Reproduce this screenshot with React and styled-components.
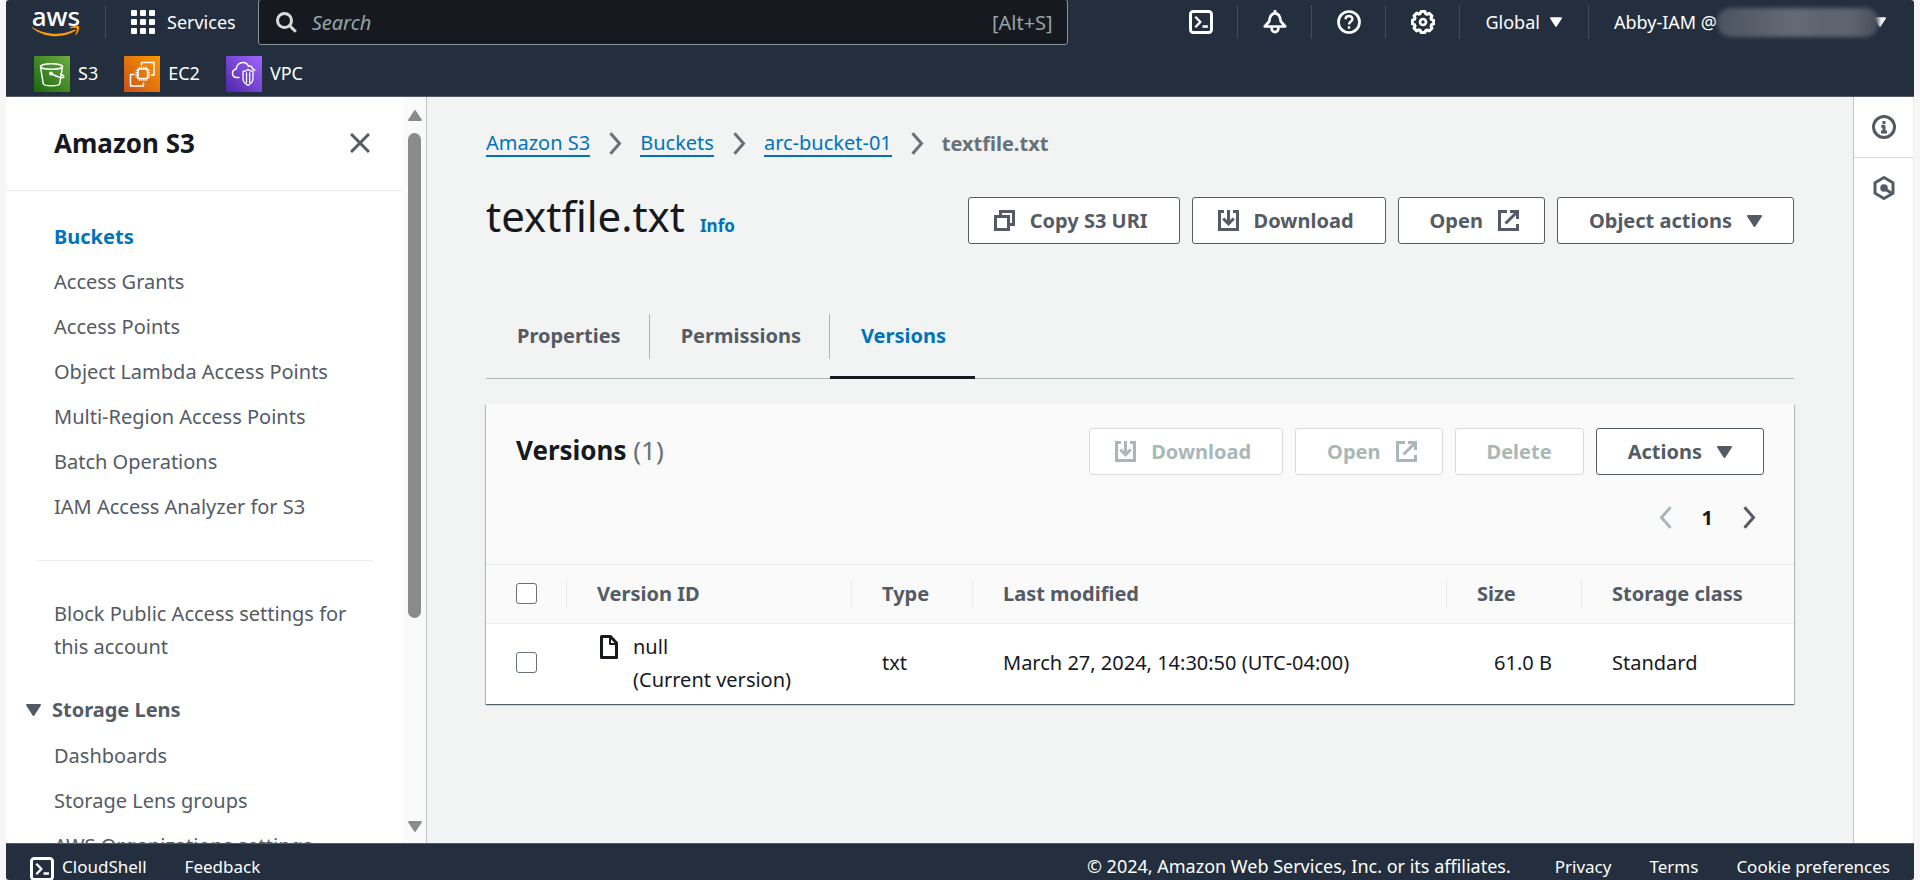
import React from "react";
import styled, { createGlobalStyle } from "styled-components";

const c = {
  navy: "#232f3e",
  ink: "#16191f",
  text: "#545b64",
  muted: "#687078",
  link: "#0073bb",
  disabled: "#aab7b8",
  line: "#eaeded",
  canvas: "#f2f3f3",
};

const GlobalStyle = createGlobalStyle`
  *, *::before, *::after { box-sizing: border-box; }
  body {
    margin: 0;
    background: #f6f6f6;
    color: ${c.ink};
    font-family: "Noto Sans", "Open Sans", sans-serif;
    font-size: 20px;
    line-height: 33px;
  }
  a { color: inherit; text-decoration: none; }
  button { font: inherit; color: inherit; background: none; border: 0; padding: 0; cursor: pointer; }
  button:disabled { cursor: default; }
  ul, ol { list-style: none; margin: 0; padding: 0; }
  h1, h2 { margin: 0; }
  svg { display: block; flex: none; }
`;

const Shell = styled.div`
  display: flex;
  flex-direction: column;
  height: 100vh;
  margin: 0 6px;
  overflow: hidden;
  border-radius: 3px;
  background: #fff;
`;

/* ---------- Top navigation ---------- */

const TopNav = styled.header`
  flex: none;
  background: ${c.navy};
  border-bottom: 1px solid ${c.text};
  color: #fff;
  font-size: 18px;
`;

const NavRow = styled.div`
  display: flex;
  align-items: center;
  height: 44px;
  padding: 0 28px 0 26px;
`;

const Logo = styled.a`
  display: flex;
  flex-direction: column;
  align-items: center;
  width: 48px;
  font-size: 26px;
  font-weight: 500;
  line-height: 18px;
`;

const Rule = styled.span`
  width: 1px;
  height: 34px;
  background: #414d5c;
  flex: none;
  margin-left: ${(p) => p.$before || 0}px;
`;

const ServicesButton = styled.button`
  display: flex;
  align-items: center;
  gap: 12px;
  margin: 0 22px 0 25px;
`;

const SearchBox = styled.label`
  display: flex;
  align-items: center;
  gap: 15px;
  flex: 0 1 810px;
  height: 46px;
  padding: 0 14px 0 17px;
  background: ${c.ink};
  border: 1px solid #879596;
  border-radius: 3px;
  color: #95a5a6;
  font-size: 20px;
`;

const SearchInput = styled.input`
  flex: 1;
  min-width: 0;
  border: 0;
  outline: 0;
  padding: 0;
  background: transparent;
  color: #fff;
  font: inherit;
  &::placeholder { color: #95a5a6; font-style: italic; opacity: 1; }
`;

const NavEnd = styled.div`
  display: flex;
  align-items: center;
  margin-left: auto;
`;

const NavIcon = styled.button`
  display: flex;
  justify-content: center;
  width: 73px;
`;

const NavMenu = styled.button`
  display: flex;
  align-items: center;
  gap: ${(p) => p.$gap || 0}px;
  padding: ${(p) => p.$pad};
  white-space: nowrap;
`;

const Redacted = styled.span`
  position: relative;
  z-index: 1;
  width: 162px;
  height: 29px;
  margin-right: -5px;
  border-radius: 14px;
  background: linear-gradient(90deg, #4b5361, #565d69 20%, #656b76 48%, #5d636f 66%, #5f6570 82%, #454d5b);
  filter: blur(2px);
`;

const Favorites = styled.nav`
  display: flex;
  align-items: center;
  gap: 26px;
  height: 52px;
  padding: 7px 28px 0;
`;

const Favorite = styled.a`
  display: flex;
  align-items: center;
  gap: 8px;
`;

/* ---------- Side navigation ---------- */

const Workspace = styled.div`
  display: flex;
  flex: 1;
  min-height: 0;
`;

const Sidebar = styled.aside`
  display: flex;
  flex: none;
  width: 421px;
  border-right: 1px solid #bcc4c4;
  color: ${c.text};
`;

const SideScroll = styled.div`
  flex: 1;
  overflow: hidden;
`;

const SideHeader = styled.div`
  display: flex;
  align-items: center;
  justify-content: space-between;
  height: 94px;
  padding: 0 33px 2px 48px;
  border-bottom: 1px solid ${c.line};
  color: ${c.ink};
`;

const SideTitle = styled.h2`
  font-size: 26px;
  font-weight: 700;
  line-height: 36px;
`;

const SideList = styled.ul`
  display: flex;
  flex-direction: column;
  gap: 12px;
  padding: ${(p) => p.$pad};
`;

const SideLink = styled.a`
  display: block;
  color: ${(p) => (p.$active ? c.link : c.text)};
  font-weight: ${(p) => (p.$active ? 700 : 400)};
`;

const SideRule = styled.hr`
  margin: 37px 30px 36px;
  border: 0;
  border-top: 1px solid ${c.line};
`;

const SideGroup = styled.button`
  display: flex;
  align-items: center;
  gap: 11px;
  padding-left: 20px;
  margin-top: 30px;
  font-weight: 700;
`;

const Scrollbar = styled.div`
  display: flex;
  flex-direction: column;
  align-items: center;
  flex: none;
  width: 23px;
  padding: 13px 0 11px;
  background: #fafafa;
`;

const Track = styled.div`
  flex: 1;
  margin: 12px 0 13px;
  padding-bottom: 190px;
  width: 13px;
`;

const Thumb = styled.div`
  height: 100%;
  border-radius: 7px;
  background: #8b8b8b;
`;

/* ---------- Content ---------- */

const Main = styled.main`
  flex: 1;
  min-width: 0;
  padding: 30px 59px;
  background: ${c.canvas};
`;

const Breadcrumbs = styled.ol`
  display: flex;
  align-items: center;
`;

const Crumb = styled.li`
  display: flex;
  align-items: center;
  gap: 19px;
  margin-right: 18px;
  color: ${c.muted};
  font-weight: ${(p) => (p.$current ? 700 : 400)};
  a {
    color: ${c.link};
    line-height: 25px;
    border-bottom: 2px solid ${c.link};
  }
`;

const PageHeader = styled.div`
  display: flex;
  align-items: flex-start;
  justify-content: space-between;
  margin-top: 37px;
`;

const TitleGroup = styled.div`
  display: flex;
  align-items: baseline;
  gap: 15px;
`;

const PageTitle = styled.h1`
  font-size: 42px;
  font-weight: 400;
  line-height: 38px;
`;

const InfoLink = styled.a`
  color: ${c.link};
  font-size: 17px;
  font-weight: 700;
`;

const Actions = styled.div`
  display: flex;
  gap: 12px;
`;

const Button = styled.button`
  display: flex;
  align-items: center;
  justify-content: center;
  gap: 15px;
  height: 47px;
  padding: 0 ${(p) => p.$right || 31}px 0 ${(p) => p.$left || 31}px;
  background: #fff;
  border: 1px solid ${c.text};
  border-radius: 3px;
  color: ${c.text};
  font-weight: 700;
  white-space: nowrap;
  &:disabled { color: ${c.disabled}; border-color: #d5dbdb; }
`;

const Tabs = styled.div`
  display: flex;
  margin-top: 63px;
  border-bottom: 1px solid ${c.disabled};
`;

const Tab = styled.button`
  position: relative;
  height: 72px;
  padding: 0 29px 12px 31px;
  margin-bottom: -1px;
  border-bottom: 3px solid ${(p) => (p.$active ? c.ink : "transparent")};
  color: ${(p) => (p.$active ? c.link : c.text)};
  font-weight: 700;
  &:not(:last-child)::after {
    content: "";
    position: absolute;
    top: 7px;
    right: 0;
    width: 1px;
    height: 45px;
    background: ${c.disabled};
  }
`;

const Card = styled.section`
  margin-top: 25px;
  background: #fff;
  box-shadow: 0 1px 1px 0 rgba(0, 28, 36, 0.5), 1px 1px 1px 0 rgba(0, 28, 36, 0.2), -1px 1px 1px 0 rgba(0, 28, 36, 0.2);
`;

const CardHeader = styled.div`
  padding: 24px 30px 17px;
  background: #fafafa;
  border-bottom: 1px solid ${c.line};
`;

const CardTop = styled.div`
  display: flex;
  justify-content: space-between;
  align-items: flex-start;
`;

const CardTitle = styled.h2`
  font-size: 26px;
  font-weight: 700;
  line-height: 44px;
  span { color: ${c.muted}; font-weight: 400; }
`;

const Pager = styled.div`
  display: flex;
  align-items: center;
  justify-content: flex-end;
  gap: 30px;
  height: 60px;
  margin-top: 12px;
  padding-right: 8px;
  color: ${c.text};
  font-weight: 700;
  button:disabled { color: ${c.disabled}; }
  span { color: ${c.ink}; }
`;

const Table = styled.table`
  width: 100%;
  table-layout: fixed;
  border-collapse: collapse;
`;

const Head = styled.th`
  position: relative;
  width: ${(p) => (p.$w ? p.$w + "px" : "auto")};
  height: 58px;
  padding: 0 30px;
  background: #fafafa;
  border-bottom: 1px solid ${c.line};
  color: ${c.text};
  font-weight: 700;
  text-align: left;
  white-space: nowrap;
  &:not(:last-child)::after {
    content: "";
    position: absolute;
    top: 14px;
    right: 0;
    width: 1px;
    height: 30px;
    background: ${c.line};
  }
`;

const Cell = styled.td`
  height: 80px;
  padding: 6px 30px 8px;
  text-align: ${(p) => (p.$end ? "right" : "left")};
  white-space: nowrap;
`;

const VersionId = styled.div`
  display: flex;
  gap: 15px;
  padding-left: 3px;
  svg { margin-top: 5px; }
`;

const Check = styled.input`
  appearance: none;
  display: block;
  width: 21px;
  height: 21px;
  margin: 0;
  border: 1px solid ${c.muted};
  border-radius: 3px;
  background: #fff;
`;

/* ---------- Tools rail and footer ---------- */

const Rail = styled.aside`
  flex: none;
  width: 61px;
  border-left: 1px solid #bcc4c4;
  border-right: 1px solid ${c.line};
  background: #fff;
  color: ${c.text};
`;

const RailButton = styled.button`
  display: flex;
  align-items: center;
  justify-content: center;
  width: 100%;
  height: 61px;
  border-bottom: 1px solid ${(p) => (p.$last ? "transparent" : "#d5dbdb")};
`;

const Footer = styled.footer`
  display: flex;
  align-items: flex-start;
  justify-content: space-between;
  flex: none;
  height: 37px;
  padding: 6px 24px 0;
  background: ${c.navy};
  border-top: 1px solid ${c.text};
  color: #fff;
  font-size: 17px;
`;

const FooterGroup = styled.div`
  display: flex;
  align-items: center;
  gap: 38px;
`;

const Copyright = styled.span`
  margin-right: 6px;
  font-size: 18px;
`;

const ShellLink = styled.button`
  display: flex;
  align-items: center;
  gap: 8px;
  svg { margin-top: 4px; }
`;

/* ---------- Icons ---------- */

const Line = ({ size = 24, w = 2, children, box = 16, height }) => (
  <svg width={size} height={height || size} viewBox={`0 0 ${box} ${box}`} fill="none" stroke="currentColor" strokeWidth={w} strokeLinejoin="round" aria-hidden="true">
    {children}
  </svg>
);

const CaretDown = ({ w = 15, h = 12, up, fill = "currentColor" }) => (
  <svg width={w} height={h} viewBox="0 0 15 12" aria-hidden="true">
    <path d={up ? "M1 11h13L7.500 1z" : "M1 1h13L7.500 11z"} fill={fill} stroke={fill} strokeWidth="2" strokeLinejoin="round" />
  </svg>
);

const Chevron = ({ left }) => (
  <svg width="13" height="23" viewBox="0 0 13 23" fill="none" stroke="currentColor" strokeWidth="3" aria-hidden="true">
    <path d={left ? "M11.500 1.200 2.500 11.500l9 10.300" : "M1.500 1.200l9 10.300-9 10.300"} />
  </svg>
);

const Swoosh = () => (
  <svg width="48" height="12" viewBox="0 0 48 12" aria-hidden="true">
    <path d="M.4 2.200c12 7.600 29 8.800 42.200 2.300.9-.4 1.600.6.8 1.300C32.200 13.600 12.500 13.400.1 3c-.5-.5-.2-1 .3-.8z" fill="#ff9900" />
    <path d="M38 2.500c3-1.800 8-2.200 8.900-1.200.9 1.100-.3 6.200-2.900 8.700-.5.400-.9.100-.7-.4.700-1.700 2-5 1.400-5.900-.6-.9-4.200-.6-6.300-.4-.7.100-.8-.5-.4-.8z" fill="#ff9900" />
  </svg>
);

const GridIcon = () => (
  <svg width="24" height="24" viewBox="0 0 24 24" fill="#fff" aria-hidden="true">
    {[0, 9, 18].map((y) => [0, 9, 18].map((x) => <rect key={x + "-" + y} x={x} y={y} width="6" height="6" rx="1" />))}
  </svg>
);

const SearchIcon = () => (
  <svg width="21" height="21" viewBox="0 0 21 21" fill="none" stroke="#d5dbdb" strokeWidth="3" aria-hidden="true">
    <circle cx="8.500" cy="8.500" r="7" />
    <path d="M13.500 13.500l6.300 6.300" />
  </svg>
);

const ShellIcon = () => (
  <Line>
    <rect x="1" y="1" width="14" height="14" rx="1.800" />
    <path d="M4.200 4.500 7.600 8l-3.400 3.500M9 11h3.600" strokeWidth="1.600" />
  </Line>
);

const BellIcon = () => (
  <Line w={1.8}>
    <path d="M1.200 11h13.600L11.800 7.500C11.500 4.200 10.300 2.200 8 2.200S4.500 4.200 4.200 7.500z" />
    <path d="M8 0v2.500" />
    <path d="M5.800 11.500v1a2.200 2.200 0 0 0 4.400 0v-1" />
  </Line>
);

const HelpIcon = () => (
  <Line w={1.8}>
    <circle cx="8" cy="8" r="7" />
    <path d="M5.700 6.200C5.700 3.300 10.300 3.400 10.300 6c0 1.700-2.300 1.700-2.300 3.700M8 10.800v1.700" strokeWidth="1.600" />
  </Line>
);

const GearIcon = () => (
  <Line>
    <path
      d="M6.700 1h2.600l.5 1.500 1 .4 1.400-.7 1.800 1.800-.7 1.400.4 1 1.400.5v2.400l-1.400.5-.4 1 .7 1.400-1.800 1.800-1.400-.7-1 .4L9.300 15H6.700l-.5-1.400-1-.4-1.400.7L2 12.100l.7-1.400-.4-1L.9 9.200V6.800l1.400-.5.4-1L2 3.900l1.800-1.800 1.400.7 1-.4z"
      strokeWidth="2"
    />
    <circle cx="8" cy="8" r="2" strokeWidth="1.800" />
  </Line>
);

const CloseIcon = () => (
  <svg width="20" height="20" viewBox="0 0 20 20" stroke={c.text} strokeWidth="3" aria-hidden="true">
    <path d="M1 1l18 18M19 1L1 19" />
  </svg>
);

const CopyIcon = () => (
  <svg width="21" height="21" viewBox="0 0 21 21" fill="none" stroke="currentColor" strokeWidth="3" aria-hidden="true">
    <path d="M1.500 6.500h13v13h-13z" />
    <path d="M6.500 6V1.500h13v13H15" />
  </svg>
);

const DownloadIcon = () => (
  <svg width="21" height="21" viewBox="0 0 21 21" fill="none" stroke="currentColor" strokeWidth="3" aria-hidden="true">
    <path d="M6 1.500H1.500v18h18v-18H15" />
    <path d="M10.500 0v13M5.200 8.500l5.300 5.300 5.300-5.300" />
  </svg>
);

const ExternalIcon = () => (
  <svg width="21" height="21" viewBox="0 0 21 21" fill="none" stroke="currentColor" strokeWidth="3" aria-hidden="true">
    <path d="M9 1.500H1.500v18h18V14" />
    <path d="M12 1.500h7.500V9M19 2 7.500 13.500" />
  </svg>
);

const FileIcon = () => (
  <svg width="18" height="24" viewBox="0 0 18 24" fill="none" stroke={c.ink} strokeWidth="3" strokeLinejoin="round" aria-hidden="true">
    <path d="M1.500 1.500h9l6 6.500v14.500h-15z" />
    <path d="M10 1.500V9h6.500" strokeWidth="2" />
  </svg>
);

const InfoIcon = () => (
  <Line w={2}>
    <circle cx="8" cy="8" r="7" />
    <path d="M8 4v2M6.200 7.500H8v3.800M6 11.300h4" />
  </Line>
);

const HexIcon = () => (
  <Line w={2}>
    <path d="M8 1l6 3.500v7L8 15l-6-3.500v-7z" />
    <circle cx="8" cy="8" r="1.500" fill="currentColor" />
    <path d="M8.500 8.500l4.500 3" />
  </Line>
);

const ServiceTile = ({ from, to, id, children }) => (
  <svg width="36" height="36" viewBox="0 0 36 36" fill="none" stroke="#fff" strokeWidth="1.500" strokeLinejoin="round" strokeLinecap="round" aria-hidden="true">
    <defs>
      <linearGradient id={id} x1="0" y1="1" x2="1" y2="0">
        <stop offset="0" stopColor={from} />
        <stop offset="1" stopColor={to} />
      </linearGradient>
    </defs>
    <rect width="36" height="36" fill={`url(#${id})`} stroke="none" />
    {children}
  </svg>
);

const S3Tile = () => (
  <ServiceTile id="tile-s3" from="#1b660f" to="#6cae3e">
    <ellipse cx="17.500" cy="10.500" rx="11" ry="2.800" />
    <path d="M6.500 10.500l2.700 17c.5 3 16.100 3 16.600 0l2.700-17" />
    <circle cx="17" cy="17.500" r="1.200" />
    <path d="M18 18c6 3.500 11.500 4.500 11.800 3 .2-1-1.500-2.200-3-3" />
  </ServiceTile>
);

const Ec2Tile = () => (
  <ServiceTile id="tile-ec2" from="#c8511b" to="#ff9900">
    <rect x="14" y="13" width="9.500" height="9.500" />
    <path d="M15.500 13v-2m2.200 2v-2m2.200 2v-2m2.200 2v-2M15.500 24.500v-2m2.200 2v-2m2.200 2v-2m2.200 2v-2M12 14.500h2M12 16.700h2M12 18.900h2M12 21h2M23.500 14.500h2M23.500 16.700h2M23.500 18.900h2M23.500 21h2" strokeWidth="1.200" />
    <path d="M17.500 9V6.500h12.500V19H27.500M10 18.500H6.500v11.500h13V27" />
  </ServiceTile>
);

const VpcTile = () => (
  <ServiceTile id="tile-vpc" from="#4d27a8" to="#a166ff">
    <path d="M13 21.500h-2c-2.500 0-4.500-1.600-4.500-4.200 0-2.500 1.500-3.800 3.700-4.300.2-4 3.300-6.500 6.800-6.500 2.700 0 4.500 1.500 5.500 3.800 2-1 3.800.2 4 2.700 1 .2 1.700.5 2.300 1.300" />
    <path d="M22 13.500c1.500 1.200 3 1.700 5 1.800v7c0 3.200-2 5.500-5 7-3-1.500-5-3.800-5-7v-7c2-.1 3.500-.6 5-1.800zM20.500 17v9.500M23.700 17v9.500" strokeWidth="1.300" />
  </ServiceTile>
);

/* ---------- Data ---------- */

const primaryLinks = [
  "Buckets",
  "Access Grants",
  "Access Points",
  "Object Lambda Access Points",
  "Multi-Region Access Points",
  "Batch Operations",
  "IAM Access Analyzer for S3",
];
const lensLinks = ["Dashboards", "Storage Lens groups", "AWS Organizations settings"];
const favorites = [
  ["S3", <S3Tile key="s3" />],
  ["EC2", <Ec2Tile key="ec2" />],
  ["VPC", <VpcTile key="vpc" />],
];
const navIcons = [
  ["CloudShell", <ShellIcon key="s" />],
  ["Notifications", <BellIcon key="b" />],
  ["Help", <HelpIcon key="h" />],
  ["Settings", <GearIcon key="g" />],
];
const trail = ["Amazon S3", "Buckets", "arc-bucket-01"];
const tabs = ["Properties", "Permissions", "Versions"];

export default function App() {
  return (
    <>
      <GlobalStyle />
      <Shell>
        <TopNav>
          <NavRow>
            <Logo href="#">
              aws
              <Swoosh />
            </Logo>
            <Rule $before={25} />
            <ServicesButton>
              <GridIcon />
              Services
            </ServicesButton>
            <SearchBox>
              <SearchIcon />
              <SearchInput type="text" placeholder="Search" aria-label="Search" />
              [Alt+S]
            </SearchBox>
            <NavEnd>
              {navIcons.map(([label, icon]) => (
                <React.Fragment key={label}>
                  <NavIcon aria-label={label}>{icon}</NavIcon>
                  <Rule />
                </React.Fragment>
              ))}
              <NavMenu $gap={10} $pad="0 26px 0 25px">
                Global
                <CaretDown w={12} h={10} />
              </NavMenu>
              <Rule />
              <NavMenu $pad="0 0 0 25px">
                Abby-IAM @
                <Redacted />
                <CaretDown w={12} h={10} />
              </NavMenu>
            </NavEnd>
          </NavRow>
          <Favorites aria-label="Favorites">
            {favorites.map(([label, tile]) => (
              <Favorite href="#" key={label}>
                {tile}
                {label}
              </Favorite>
            ))}
          </Favorites>
        </TopNav>

        <Workspace>
          <Sidebar>
            <SideScroll>
              <SideHeader>
                <SideTitle>Amazon S3</SideTitle>
                <button aria-label="Close navigation">
                  <CloseIcon />
                </button>
              </SideHeader>
              <SideList $pad="29px 40px 0 48px">
                {primaryLinks.map((label, i) => (
                  <li key={label}>
                    <SideLink href="#" $active={i === 0}>{label}</SideLink>
                  </li>
                ))}
              </SideList>
              <SideRule />
              <SideList $pad="0 40px 0 48px">
                <li>
                  <SideLink href="#">Block Public Access settings for this account</SideLink>
                </li>
              </SideList>
              <SideGroup aria-expanded="true">
                <CaretDown />
                Storage Lens
              </SideGroup>
              <SideList $pad="13px 40px 0 48px">
                {lensLinks.map((label) => (
                  <li key={label}>
                    <SideLink href="#">{label}</SideLink>
                  </li>
                ))}
              </SideList>
            </SideScroll>
            <Scrollbar aria-hidden="true">
              <CaretDown w={14} h={11} up fill="#8b8b8b" />
              <Track>
                <Thumb />
              </Track>
              <CaretDown w={14} h={11} fill="#8b8b8b" />
            </Scrollbar>
          </Sidebar>

          <Main>
            <Breadcrumbs aria-label="Breadcrumbs">
              {trail.map((label) => (
                <Crumb key={label}>
                  <a href="#">{label}</a>
                  <Chevron />
                </Crumb>
              ))}
              <Crumb $current>textfile.txt</Crumb>
            </Breadcrumbs>

            <PageHeader>
              <TitleGroup>
                <PageTitle>textfile.txt</PageTitle>
                <InfoLink href="#">Info</InfoLink>
              </TitleGroup>
              <Actions>
                <Button $left={25}>
                  <CopyIcon />
                  Copy S3 URI
                </Button>
                <Button $left={25}>
                  <DownloadIcon />
                  Download
                </Button>
                <Button $right={25}>
                  Open
                  <ExternalIcon />
                </Button>
                <Button>
                  Object actions
                  <CaretDown />
                </Button>
              </Actions>
            </PageHeader>

            <Tabs role="tablist">
              {tabs.map((label) => (
                <Tab key={label} role="tab" $active={label === "Versions"} aria-selected={label === "Versions"}>
                  {label}
                </Tab>
              ))}
            </Tabs>

            <Card>
              <CardHeader>
                <CardTop>
                  <CardTitle>
                    Versions <span>(1)</span>
                  </CardTitle>
                  <Actions>
                    <Button disabled $left={25}>
                      <DownloadIcon />
                      Download
                    </Button>
                    <Button disabled $right={25}>
                      Open
                      <ExternalIcon />
                    </Button>
                    <Button disabled>Delete</Button>
                    <Button>
                      Actions
                      <CaretDown />
                    </Button>
                  </Actions>
                </CardTop>
                <Pager>
                  <button disabled aria-label="Previous page">
                    <Chevron left />
                  </button>
                  <span>1</span>
                  <button aria-label="Next page">
                    <Chevron />
                  </button>
                </Pager>
              </CardHeader>
              <Table>
                <thead>
                  <tr>
                    <Head $w={81}>
                      <Check type="checkbox" aria-label="Select all versions" />
                    </Head>
                    <Head $w={285}>Version ID</Head>
                    <Head $w={121}>Type</Head>
                    <Head>Last modified</Head>
                    <Head $w={135}>Size</Head>
                    <Head $w={212}>Storage class</Head>
                  </tr>
                </thead>
                <tbody>
                  <tr>
                    <Cell>
                      <Check type="checkbox" aria-label="Select version null" />
                    </Cell>
                    <Cell>
                      <VersionId>
                        <FileIcon />
                        <div>
                          null
                          <br />
                          (Current version)
                        </div>
                      </VersionId>
                    </Cell>
                    <Cell>txt</Cell>
                    <Cell>March 27, 2024, 14:30:50 (UTC-04:00)</Cell>
                    <Cell $end>61.0 B</Cell>
                    <Cell>Standard</Cell>
                  </tr>
                </tbody>
              </Table>
            </Card>
          </Main>

          <Rail>
            <RailButton aria-label="Info panel">
              <InfoIcon />
            </RailButton>
            <RailButton $last aria-label="Diagnostics">
              <HexIcon />
            </RailButton>
          </Rail>
        </Workspace>

        <Footer>
          <FooterGroup>
            <ShellLink>
              <ShellIcon />
              CloudShell
            </ShellLink>
            <a href="#">Feedback</a>
          </FooterGroup>
          <FooterGroup>
            <Copyright>© 2024, Amazon Web Services, Inc. or its affiliates.</Copyright>
            <a href="#">Privacy</a>
            <a href="#">Terms</a>
            <a href="#">Cookie preferences</a>
          </FooterGroup>
        </Footer>
      </Shell>
    </>
  );
}
